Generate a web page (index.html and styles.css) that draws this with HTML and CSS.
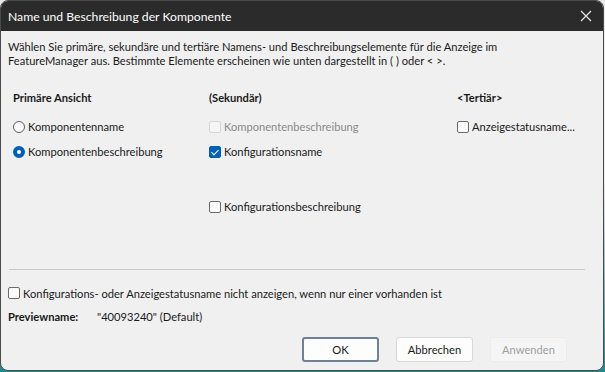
FILE: index.html
```html
<!DOCTYPE html>
<html lang="de">
<head>
  <meta charset="UTF-8">
  <title>Name und Beschreibung der Komponente</title>
  <link rel="stylesheet" href="styles.css">
</head>
<body>
  <div class="window">
    <div class="titlebar">
      <span class="title">Name und Beschreibung der Komponente</span>
      <svg class="close" width="12" height="12" viewBox="0 0 12 12">
        <path d="M1 1 L11 11 M11 1 L1 11" stroke="#e6e6e6" stroke-width="1.2" fill="none"/>
      </svg>
    </div>

    <div class="content">
      <p class="intro">Wählen Sie primäre, sekundäre und tertiäre Namens- und Beschreibungselemente für die Anzeige im FeatureManager aus. Bestimmte Elemente erscheinen wie unten dargestellt in ( ) oder &lt; &gt;.</p>

      <div class="options">
        <div class="head">Primäre Ansicht</div>
        <div class="head">(Sekundär)</div>
        <div class="head">&lt;Tertiär&gt;</div>

        <label class="opt"><span class="radio"></span>Komponentenname</label>
        <label class="opt disabled"><span class="check"></span>Komponentenbeschreibung</label>
        <label class="opt"><span class="check"></span>Anzeigestatusname...</label>

        <label class="opt"><span class="radio on"></span>Komponentenbeschreibung</label>
        <label class="opt"><span class="check on"></span>Konfigurationsname</label>
        <div></div>

        <div></div>
        <label class="opt"><span class="check"></span>Konfigurationsbeschreibung</label>
        <div></div>
      </div>

      <hr class="sep">

      <label class="opt single"><span class="check"></span>Konfigurations- oder Anzeigestatusname nicht anzeigen, wenn nur einer vorhanden ist</label>

      <div class="preview">
        <span class="preview-label">Previewname:</span>
        <span>"40093240" (Default)</span>
      </div>

      <div class="buttons">
        <button class="btn default">OK</button>
        <button class="btn">Abbrechen</button>
        <button class="btn" disabled>Anwenden</button>
      </div>
    </div>
  </div>
</body>
</html>
```

FILE: styles.css
```css
html, body {
  margin: 0;
  padding: 0;
  width: 605px;
  height: 372px;
  overflow: hidden;
}
body {
  background: linear-gradient(#e9e9e9 0%, #e9e9e9 50%, #1f8a8e 100%);
  font-family: Lato, sans-serif;
  font-size: 11.15px;
  color: #1a1a1a;
}
.window {
  box-sizing: border-box;
  width: 604px;
  height: 371px;
  background: #f0f0f0;
  border: 1px solid #4a4a4a;
  border-radius: 8px;
  overflow: hidden;
  display: flex;
  flex-direction: column;
}
.titlebar {
  height: 30px;
  flex: none;
  background: #2b2b2b;
  color: #fff;
  display: flex;
  align-items: center;
  justify-content: space-between;
  padding: 0 11px 0 7px;
  font-size: 12.2px;
}
.close {
  display: block;
}
.content {
  padding: 9px 7px 0 7px;
  flex: 1;
  display: flex;
  flex-direction: column;
}
.intro {
  margin: 0;
  line-height: 14px;
  width: 500px;
}
.options {
  display: grid;
  grid-template-columns: 196px 248px auto;
  grid-template-rows: 29px 25px 55px 16px;
  align-items: start;
  line-height: 16px;
  margin: 22px 0 0 5px;
}
.head {
  font-weight: bold;
}
.opt {
  display: flex;
  align-items: center;
  gap: 3px;
  height: 16px;
  white-space: nowrap;
}
.opt.disabled {
  color: #8a8a8a;
}
.radio {
  box-sizing: border-box;
  width: 12px;
  height: 12px;
  border: 1px solid #5c5c5c;
  border-radius: 50%;
  background: #fbfbfb;
  flex: none;
}
.radio.on {
  border: 4px solid #005fb8;
  background: #fff;
}
.check {
  box-sizing: border-box;
  width: 12px;
  height: 12px;
  border: 1px solid #6a6a6a;
  border-radius: 2px;
  background: #fbfbfb;
  flex: none;
  position: relative;
}
.disabled .check {
  border-color: #d6d6d6;
  background: #f5f5f5;
}
.check.on {
  border-color: #005fb8;
  background: #005fb8;
}
.check.on::after {
  content: "";
  position: absolute;
  left: 3px;
  top: 1px;
  width: 3px;
  height: 6px;
  border: solid #fff;
  border-width: 0 1px 1px 0;
  transform: rotate(45deg);
}
.sep {
  border: none;
  border-top: 1px solid #c8c8c8;
  margin: 54px 11px 0 1px;
}
.single {
  margin-top: 15px;
}
.preview {
  display: flex;
  line-height: 16px;
  margin-top: 8px;
}
.preview-label {
  font-weight: bold;
  width: 89px;
}
.buttons {
  display: flex;
  justify-content: flex-end;
  gap: 17px;
  margin-top: 12px;
  padding-right: 29px;
}
.btn {
  font-family: inherit;
  font-size: 11.15px;
  width: 77px;
  height: 25px;
  background: #fdfdfd;
  border: 1px solid #d8d8d8;
  border-radius: 3px;
  color: #1a1a1a;
  padding: 0;
}
.btn.default {
  border: 2px solid #6d8197;
}
.btn:disabled {
  background: #f5f5f5;
  border-color: #ececec;
  color: #a0a0a0;
}
```
